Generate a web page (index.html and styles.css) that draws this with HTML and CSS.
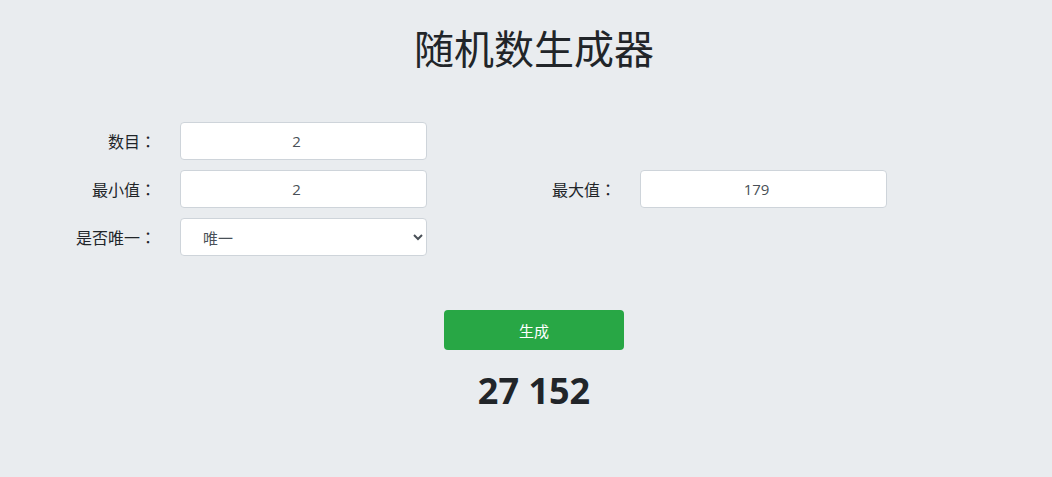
FILE: index.html
```html
<!DOCTYPE html>
<html lang="zh-CN">
<head>
<meta charset="utf-8">
<title>随机数生成器</title>
<link rel="stylesheet" href="styles.css">
</head>
<body>
<div class="page">
  <h1 class="title">随机数生成器</h1>
  <form class="form">
    <div class="half">
      <label class="label" for="count">数目<span class="colon" lang="zh-TW">：</span></label>
      <input class="field" id="count" type="text" value="2">
    </div>
    <div class="half"></div>
    <div class="half">
      <label class="label" for="min">最小值<span class="colon" lang="zh-TW">：</span></label>
      <input class="field" id="min" type="text" value="2">
    </div>
    <div class="half">
      <label class="label" for="max">最大值<span class="colon" lang="zh-TW">：</span></label>
      <input class="field" id="max" type="text" value="179">
    </div>
    <div class="half">
      <label class="label" for="unique">是否唯一<span class="colon" lang="zh-TW">：</span></label>
      <select class="field select" id="unique">
        <option>唯一</option>
        <option>不唯一</option>
      </select>
    </div>
  </form>
  <div class="actions">
    <button class="btn" type="button">生成</button>
    <div class="result">27 152</div>
  </div>
</div>
</body>
</html>
```

FILE: styles.css
```css
html, body {
  margin: 0;
  padding: 0;
}
body {
  background: #e9ecef;
  color: #212529;
  font-family: "Open Sans", "Noto Sans CJK SC", sans-serif;
  font-size: 16px;
}
.page {
  width: 1052px;
  height: 477px;
}
.title {
  margin: 0;
  padding-top: 23px;
  padding-left: 16px;
  text-align: center;
  font-size: 40px;
  line-height: 48px;
  font-weight: 400;
  font-family: "Noto Sans CJK SC", sans-serif;
}
.form {
  margin: 51px 0 0 66px;
  width: 920px;
  display: grid;
  grid-template-columns: 460px 460px;
  row-gap: 10px;
}
.half {
  display: grid;
  grid-template-columns: 90px 247px;
  column-gap: 24px;
  align-items: center;
  height: 38px;
}
.label {
  text-align: right;
  font-family: "Noto Sans CJK SC", sans-serif;
  font-size: 16px;
  color: #212529;
  white-space: nowrap;
}
.colon {
  font-family: "Noto Sans CJK TC", sans-serif;
}
.field {
  box-sizing: border-box;
  width: 247px;
  height: 38px;
  border: 1px solid #ced4da;
  border-radius: 4px;
  background: #fff;
  color: #495057;
  font-family: "Open Sans", "Noto Sans CJK SC", sans-serif;
  font-size: 15px;
  text-align: center;
  padding: 0 26px 0 12px;
  outline: none;
}
.select {
  text-align: left;
  padding: 0 12px 0 18px;
  font-family: "Noto Sans CJK SC", sans-serif;
  font-size: 15px;
}
.actions {
  margin-top: 54px;
  padding-left: 16px;
  display: flex;
  flex-direction: column;
  align-items: center;
}
.btn {
  width: 180px;
  height: 40px;
  border: none;
  border-radius: 4px;
  background: #28a745;
  color: #fff;
  font-family: "Noto Sans CJK SC", sans-serif;
  font-size: 15px;
  cursor: pointer;
}
.result {
  margin-top: 19px;
  font-family: "Open Sans", sans-serif;
  font-weight: 700;
  font-size: 36px;
  line-height: 43px;
  color: #212529;
}
```
